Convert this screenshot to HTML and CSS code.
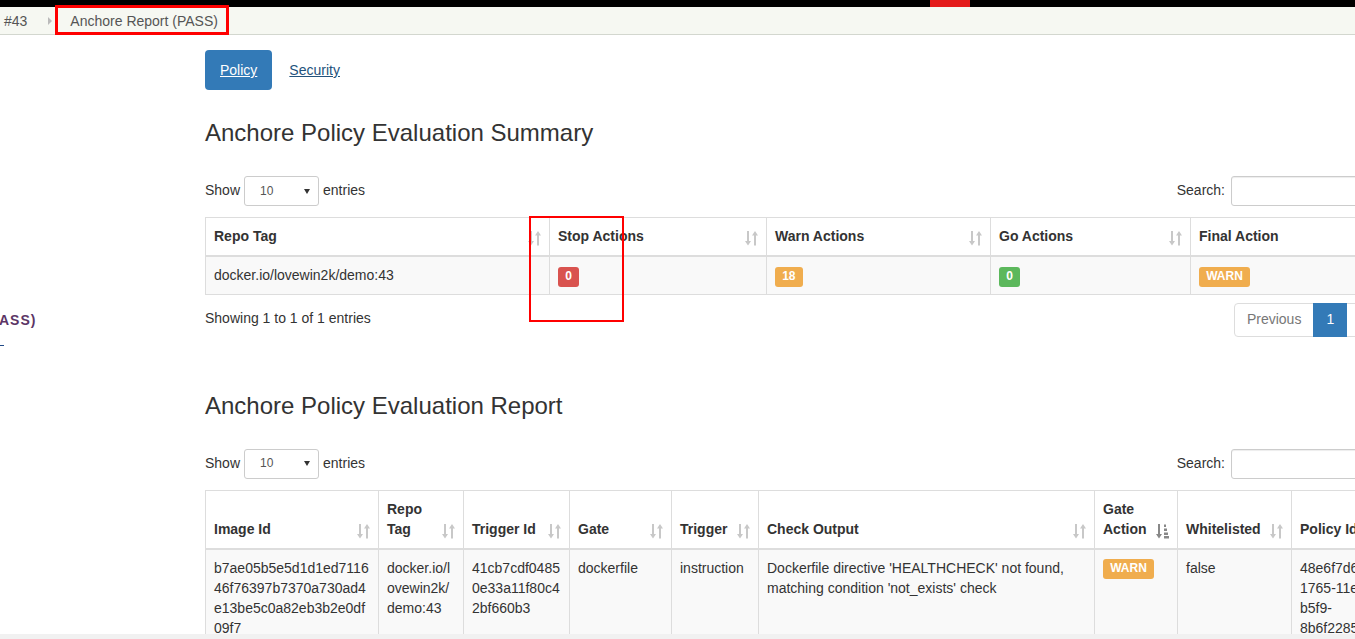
FILE: index.html
```html
<!DOCTYPE html>
<html lang="en">
<head>
<meta charset="utf-8">
<title>Anchore Report (PASS)</title>
<link rel="stylesheet" href="styles.css">
</head>
<body>
<div class="topbar"><span class="topbar-mark"></span></div>
<div class="breadcrumbs">
  <span class="crumb">#43</span>
  <span class="crumb-sep"></span>
  <span class="crumb">Anchore Report (PASS)</span>
  <span class="annot annot-crumb"></span>
</div>
<div class="page">
  <aside class="side">
    <div class="side-title">(PASS)</div>
    <span class="side-link"></span>
  </aside>
  <main class="main">
    <ul class="nav">
      <li class="active"><a href="#policy">Policy</a></li>
      <li><a href="#security">Security</a></li>
    </ul>

    <h3 class="section-title">Anchore Policy Evaluation Summary</h3>
    <div class="dt-wrapper">
      <div class="dt-top">
        <label class="dt-length">Show <span class="select">10<span class="caret"></span></span> entries</label>
        <label class="dt-filter">Search:<input type="search" class="search"></label>
      </div>
      <table class="dt summary">
        <colgroup>
          <col class="s1"><col class="s2"><col class="s3"><col class="s4"><col>
        </colgroup>
        <thead>
          <tr>
            <th>Repo Tag<svg class="sort" viewBox="0 0 13 15"><path d="M2 0V10H0L3 14.5L6 10H4V0Z M9 14.5V4.5H7L10 0L13 4.5H11V14.5Z"/></svg></th>
            <th>Stop Actions<svg class="sort" viewBox="0 0 13 15"><path d="M2 0V10H0L3 14.5L6 10H4V0Z M9 14.5V4.5H7L10 0L13 4.5H11V14.5Z"/></svg></th>
            <th>Warn Actions<svg class="sort" viewBox="0 0 13 15"><path d="M2 0V10H0L3 14.5L6 10H4V0Z M9 14.5V4.5H7L10 0L13 4.5H11V14.5Z"/></svg></th>
            <th>Go Actions<svg class="sort" viewBox="0 0 13 15"><path d="M2 0V10H0L3 14.5L6 10H4V0Z M9 14.5V4.5H7L10 0L13 4.5H11V14.5Z"/></svg></th>
            <th>Final Action<svg class="sort" viewBox="0 0 13 15"><path d="M2 0V10H0L3 14.5L6 10H4V0Z M9 14.5V4.5H7L10 0L13 4.5H11V14.5Z"/></svg></th>
          </tr>
        </thead>
        <tbody>
          <tr>
            <td>docker.io/lovewin2k/demo:43</td>
            <td><span class="label label-danger">0</span></td>
            <td><span class="label label-warning">18</span></td>
            <td><span class="label label-success">0</span></td>
            <td><span class="label label-warning">WARN</span></td>
          </tr>
        </tbody>
      </table>
      <div class="dt-bottom">
        <div class="dt-info">Showing 1 to 1 of 1 entries</div>
        <ul class="pagination">
          <li class="disabled"><a href="#">Previous</a></li>
          <li class="active"><a href="#">1</a></li>
          <li class="disabled"><a href="#">Next</a></li>
        </ul>
      </div>
      <span class="annot annot-stop"></span>
    </div>

    <h3 class="section-title second">Anchore Policy Evaluation Report</h3>
    <div class="dt-wrapper second">
      <div class="dt-top">
        <label class="dt-length">Show <span class="select">10<span class="caret"></span></span> entries</label>
        <label class="dt-filter">Search:<input type="search" class="search"></label>
      </div>
      <table class="dt report">
        <colgroup>
          <col class="r1"><col class="r2"><col class="r3"><col class="r4"><col class="r5"><col class="r6"><col class="r7"><col class="r8"><col>
        </colgroup>
        <thead>
          <tr>
            <th>Image Id<svg class="sort" viewBox="0 0 13 15"><path d="M2 0V10H0L3 14.5L6 10H4V0Z M9 14.5V4.5H7L10 0L13 4.5H11V14.5Z"/></svg></th>
            <th>Repo Tag<svg class="sort" viewBox="0 0 13 15"><path d="M2 0V10H0L3 14.5L6 10H4V0Z M9 14.5V4.5H7L10 0L13 4.5H11V14.5Z"/></svg></th>
            <th>Trigger Id<svg class="sort" viewBox="0 0 13 15"><path d="M2 0V10H0L3 14.5L6 10H4V0Z M9 14.5V4.5H7L10 0L13 4.5H11V14.5Z"/></svg></th>
            <th>Gate<svg class="sort" viewBox="0 0 13 15"><path d="M2 0V10H0L3 14.5L6 10H4V0Z M9 14.5V4.5H7L10 0L13 4.5H11V14.5Z"/></svg></th>
            <th>Trigger<svg class="sort" viewBox="0 0 13 15"><path d="M2 0V10H0L3 14.5L6 10H4V0Z M9 14.5V4.5H7L10 0L13 4.5H11V14.5Z"/></svg></th>
            <th>Check Output<svg class="sort" viewBox="0 0 13 15"><path d="M2 0V10H0L3 14.5L6 10H4V0Z M9 14.5V4.5H7L10 0L13 4.5H11V14.5Z"/></svg></th>
            <th>Gate Action<svg class="sort sorted" viewBox="0 0 13 15"><path d="M2 0V10H0L3 14.5L6 10H4V0Z"/><rect x="8" y="0.5" width="2" height="2.5"/><rect x="8" y="4.5" width="3" height="2.5"/><rect x="8" y="8.5" width="4" height="2.5"/><rect x="8" y="12" width="5" height="2.5"/></svg></th>
            <th>Whitelisted<svg class="sort" viewBox="0 0 13 15"><path d="M2 0V10H0L3 14.5L6 10H4V0Z M9 14.5V4.5H7L10 0L13 4.5H11V14.5Z"/></svg></th>
            <th>Policy Id<svg class="sort" viewBox="0 0 13 15"><path d="M2 0V10H0L3 14.5L6 10H4V0Z M9 14.5V4.5H7L10 0L13 4.5H11V14.5Z"/></svg></th>
          </tr>
        </thead>
        <tbody>
          <tr>
            <td class="brk">b7ae05b5e5d1d1ed711646f76397b7370a730ad4e13be5c0a82eb3b2e0df09f7</td>
            <td class="brk">docker.io/lovewin2k/demo:43</td>
            <td class="brk">41cb7cdf04850e33a11f80c42bf660b3</td>
            <td>dockerfile</td>
            <td>instruction</td>
            <td>Dockerfile directive 'HEALTHCHECK' not found, matching condition 'not_exists' check</td>
            <td><span class="label label-warning">WARN</span></td>
            <td>false</td>
            <td>48e6f7d6-1765-11e8-b5f9-8b6f22857b2d</td>
          </tr>
          <tr>
            <td class="brk">b7ae05b5e5d1d1ed711646f76397b7370a730ad4e13be5c0a82eb3b2e0df09f7</td>
            <td class="brk">docker.io/lovewin2k/demo:43</td>
            <td class="brk">8b4d30e1a7c2f95e06d1b3a47c9e2f10</td>
            <td>dockerfile</td>
            <td>instruction</td>
            <td>Dockerfile directive 'USER' not found, matching condition 'not_exists' check</td>
            <td><span class="label label-warning">WARN</span></td>
            <td>false</td>
            <td>48e6f7d6-1765-11e8-b5f9-8b6f22857b2d</td>
          </tr>
        </tbody>
      </table>
    </div>
  </main>
</div>
<div class="hscroll"></div>
</body>
</html>
```
FILE: styles.css
```css
* { box-sizing: border-box; }
html, body { margin: 0; height: 100%; overflow: hidden; }
body {
  font-family: "Liberation Sans", Arial, sans-serif;
  font-size: 14px;
  line-height: 1.42857;
  color: #333;
  background: #fff;
}

.topbar { height: 7px; background: #000; display: flex; }
.topbar-mark { width: 40px; margin-left: 930px; background: #e41b1b; }

.breadcrumbs {
  position: relative;
  display: flex;
  align-items: center;
  height: 28px;
  line-height: 27px;
  padding: 1px 0 0 4px;
  background: #f6f8f2;
  border-bottom: 1px solid #d3d7cf;
  color: #555;
}
.crumb-sep {
  width: 0; height: 0;
  border-left: 4px solid #bbb;
  border-top: 4px solid transparent;
  border-bottom: 4px solid transparent;
  margin: 0 18px 0 21px;
}

.annot { position: absolute; border: 3px solid #f00; pointer-events: none; z-index: 5; }
.annot-crumb { left: 55px; top: -2px; width: 174px; height: 30px; }
.annot-stop { left: 324px; top: 40px; width: 95px; height: 106px; border-width: 2px; }

.page { display: flex; }
.side { width: 205px; flex: none; }
.side-title {
  margin: 275px 0 0 -16px;
  font-weight: bold;
  letter-spacing: 1px;
  line-height: 20px;
  color: #5c3566;
}
.side-link { display: block; width: 4px; height: 1px; margin-top: 15px; background: #204a87; }

.main { width: 1196px; flex: none; }

.nav { display: flex; list-style: none; margin: 15px 0 0; padding: 0; }
.nav li + li { margin-left: 2px; }
.nav a {
  display: block;
  padding: 11px 15px 9px;
  border-radius: 4px;
  color: #23527c;
  text-decoration: underline;
}
.nav .active a { background: #337ab7; color: #fff; }

.section-title {
  margin: 30px 0 0;
  font-size: 24px;
  font-weight: normal;
  line-height: 1.1;
}
.section-title.second { margin-top: 56px; }

.dt-wrapper { position: relative; }
.dt-top {
  display: flex;
  justify-content: space-between;
  align-items: center;
  height: 30px;
  margin-top: 30px;
}
.dt-wrapper.second .dt-top { margin-top: 29px; }
.dt-length, .dt-filter { display: flex; align-items: center; font-weight: normal; }
.select {
  display: inline-flex;
  align-items: center;
  justify-content: space-between;
  width: 75px;
  height: 30px;
  margin: 0 4px;
  padding: 0 8px 0 15px;
  border: 1px solid #ccc;
  border-radius: 3px;
  font-size: 12px;
  color: #555;
  background: #fff;
}
.caret {
  width: 0; height: 0;
  border-top: 5px solid #333;
  border-left: 3px solid transparent;
  border-right: 3px solid transparent;
}
.search {
  width: 170px;
  height: 30px;
  margin-left: 6px;
  border: 1px solid #ccc;
  border-radius: 3px;
  box-shadow: inset 0 1px 1px rgba(0,0,0,.075);
  font: 12px "Liberation Sans", Arial, sans-serif;
}

.dt {
  width: 100%;
  margin-top: 11px;
  border-collapse: collapse;
  table-layout: fixed;
  border: 1px solid #ddd;
}
.dt th {
  position: relative;
  padding: 9px 30px 8px 8px;
  text-align: left;
  vertical-align: bottom;
  font-weight: bold;
  border: 1px solid #ddd;
  border-bottom-width: 2px;
}
.dt td {
  padding: 9px 8px 8px;
  vertical-align: top;
  border: 1px solid #ddd;
}
.dt tbody tr:nth-child(odd) td { background: #f9f9f9; }
.dt td.brk { word-break: break-all; }

.sort { position: absolute; right: 8px; bottom: 9px; width: 13px; height: 15px; fill: #c8c8c8; }
.sort.sorted { fill: #888; }

.summary .s1 { width: 344px; }
.summary .s2 { width: 217px; }
.summary .s3 { width: 224px; }
.summary .s4 { width: 200px; }

.report .r1 { width: 173px; }
.report .r2 { width: 85px; }
.report .r3 { width: 106px; }
.report .r4 { width: 102px; }
.report .r5 { width: 87px; }
.report .r6 { width: 336px; }
.report .r7 { width: 83px; }
.report .r8 { width: 114px; }

.label {
  padding: .2em .6em .3em;
  font-size: 12px;
  font-weight: bold;
  line-height: 1;
  color: #fff;
  border-radius: 3px;
  white-space: nowrap;
}
.label-danger { background: #d9534f; }
.label-warning { background: #f0ad4e; }
.label-success { background: #5cb85c; }

.dt-bottom { display: flex; justify-content: space-between; margin-top: 8px; }
.dt-info { padding-top: 6px; }
.pagination { display: flex; list-style: none; margin: 0; padding: 0; }
.pagination a {
  display: block;
  padding: 6px 12px;
  margin-left: -1px;
  border: 1px solid #ddd;
  background: #fff;
  color: #777;
  text-decoration: none;
}
.pagination li:first-child a { margin-left: 0; border-radius: 4px 0 0 4px; }
.pagination li:last-child a { border-radius: 0 4px 4px 0; }
.pagination .active a { position: relative; z-index: 2; background: #337ab7; border-color: #337ab7; color: #fff; }

.hscroll { position: fixed; left: 0; right: 0; bottom: 0; height: 5px; background: #f1f1f1; }
```
